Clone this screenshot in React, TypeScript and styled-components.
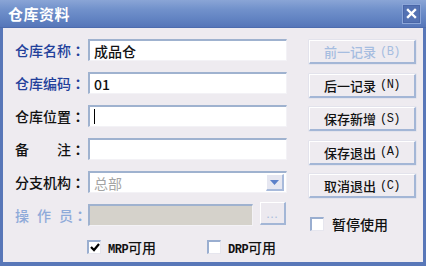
import styled, { createGlobalStyle } from "styled-components";

const GlobalStyle = createGlobalStyle`
	html, body {
		margin: 0;
		padding: 0;
		background: #ffffff;
	}
	* {
		box-sizing: border-box;
	}
`;

const CJK = `"Noto Sans CJK SC", "Noto Sans", sans-serif`;

const Window = styled.div`
	width: 426px;
	height: 266px;
	display: flex;
	flex-direction: column;
	background: #5877b8;
	padding: 0 3px 4px 3px;
	font-family: ${CJK};
`;

const TitleBar = styled.div`
	height: 28px;
	display: flex;
	align-items: center;
	justify-content: space-between;
	margin: 0 -3px;
	padding-left: 8px;
	padding-right: 5px;
	background: linear-gradient(180deg, #8aa5d6 0%, #7191cb 35%, #6283c2 70%, #5676b9 100%);
	border-bottom: 1px solid #4d6cae;
`;

const Title = styled.span`
	color: #ffffff;
	font-size: 15px;
	font-weight: 700;
	letter-spacing: 0.5px;
`;

const CloseButton = styled.div`
	width: 19px;
	height: 20px;
	display: flex;
	align-items: center;
	justify-content: center;
	background: #5472b3;
	border: 1px solid #8ba5d8;
	box-shadow: inset 0 0 0 1px #4a67a8;
`;

const Body = styled.div`
	flex: 1;
	display: flex;
	background: #eeebf0;
	padding: 11px 0 0 12px;
`;

const Form = styled.div`
	display: flex;
	flex-direction: column;
`;

const Grid = styled.div`
	display: grid;
	grid-template-columns: 70px 199px;
	column-gap: 3px;
	row-gap: 11px;
	align-items: center;
`;

const Label = styled.div<{ $tone?: "blue" | "dim" }>`
	font-size: 14px;
	font-weight: 500;
	line-height: 22px;
	white-space: nowrap;
	color: ${(p) => (p.$tone === "blue" ? "#22409b" : p.$tone === "dim" ? "#8eaad9" : "#111111")};
`;

const Colon = styled.span`
	font-family: "Noto Sans CJK JP", "Noto Sans CJK SC", sans-serif;
	font-weight: 700;
`;

const Spaced = styled.span<{ $gap: number }>`
	letter-spacing: ${(p) => p.$gap}px;
`;

const Field = styled.div<{ $disabled?: boolean }>`
	height: 22px;
	display: flex;
	align-items: center;
	padding-left: 4px;
	font-size: 14px;
	font-weight: 500;
	color: #111111;
	background: ${(p) => (p.$disabled ? "#d5d2cb" : "#ffffff")};
	border-style: solid;
	border-width: 2px 1px 1px 2px;
	border-color: #9fb2cf #f3f2f6 #f3f2f6 #9fb2cf;
	position: relative;
`;

const Caret = styled.span`
	display: inline-block;
	width: 1px;
	height: 15px;
	background: #000000;
`;

const GreyText = styled.span`
	color: #a4a4a4;
	font-weight: 400;
`;

const ArrowButton = styled.div`
	position: absolute;
	right: 2px;
	top: 1px;
	width: 18px;
	height: 17px;
	display: flex;
	align-items: center;
	justify-content: center;
	background: #e6e7f1;
	border-style: solid;
	border-width: 1px 2px 2px 1px;
	border-color: #ffffff #a8badb #a8badb #ffffff;
`;

const OperatorRow = styled.div`
	display: flex;
	align-items: center;
	gap: 7px;
`;

const DotsButton = styled.div`
	width: 26px;
	height: 23px;
	display: flex;
	align-items: center;
	justify-content: center;
	color: #a9bcdc;
	font-size: 11px;
	letter-spacing: 1px;
	background: #ece9ef;
	border-style: solid;
	border-width: 1px 2px 2px 1px;
	border-color: #ffffff #a3b6d6 #a3b6d6 #ffffff;
	margin-top: -3px;
`;

const CheckRow = styled.div`
	display: flex;
	align-items: center;
	margin-top: 13px;
	padding-left: 72px;
	height: 15px;
`;

const CheckItem = styled.div<{ $width?: number }>`
	display: flex;
	align-items: center;
	gap: 7px;
	width: ${(p) => (p.$width ? `${p.$width}px` : "auto")};
	font-size: 14px;
	font-weight: 500;
	color: #111111;
`;

const Latin = styled.span`
	font-family: "Liberation Mono", monospace;
	font-size: 12px;
	font-weight: 700;
	letter-spacing: -0.5px;
`;

const Box = styled.div`
	width: 14px;
	height: 14px;
	display: flex;
	align-items: center;
	justify-content: center;
	background: #ffffff;
	border-style: solid;
	border-width: 2px 1px 1px 2px;
	border-color: #9aaed0 #e6e6ee #e6e6ee #9aaed0;
`;

const ButtonColumn = styled.div`
	display: flex;
	flex-direction: column;
	gap: 9.5px;
	margin-left: 22px;
	margin-top: 1px;
	width: 107px;
`;

const Button = styled.div<{ $disabled?: boolean }>`
	height: 24px;
	display: flex;
	align-items: center;
	justify-content: center;
	font-size: 13px;
	font-weight: 500;
	color: ${(p) => (p.$disabled ? "#a6bde0" : "#111111")};
	background: #eeebf0;
	border-style: solid;
	border-width: 1px 2px 2px 1px;
	border-color: #ffffff #a3b6d6 #a3b6d6 #ffffff;
	box-shadow: 0 0 0 0.5px #d8dce8;
`;

const Key = styled.span`
	margin-left: 4px;
	font-family: "Liberation Mono", monospace;
	font-size: 12px;
	letter-spacing: -0.5px;
`;

const PauseItem = styled(CheckItem)`
	margin-top: 6.5px;
	padding-left: 1px;
	gap: 8px;
`;

const Check = () => (
	<svg width="10" height="9" viewBox="0 0 10 9">
		<polyline points="1,4 4,7 9,1" fill="none" stroke="#000" strokeWidth="2.2" />
	</svg>
);

const buttons = [
	{ text: "前一记录", key: "(B)", disabled: true },
	{ text: "后一记录", key: "(N)" },
	{ text: "保存新增", key: "(S)" },
	{ text: "保存退出", key: "(A)" },
	{ text: "取消退出", key: "(C)" },
];

export default function App() {
	return (
		<>
			<GlobalStyle />
			<Window>
				<TitleBar>
					<Title>仓库资料</Title>
					<CloseButton>
						<svg width="11" height="11" viewBox="0 0 11 11">
							<path d="M2 2 L9 9 M9 2 L2 9" stroke="#ffffff" strokeWidth="2.4" strokeLinecap="square" />
						</svg>
					</CloseButton>
				</TitleBar>
				<Body>
					<Form>
						<Grid>
							<Label $tone="blue">
								仓库名称<Colon>：</Colon>
							</Label>
							<Field>成品仓</Field>
							<Label $tone="blue">
								仓库编码<Colon>：</Colon>
							</Label>
							<Field>01</Field>
							<Label>
								仓库位置<Colon>：</Colon>
							</Label>
							<Field>
								<Caret />
							</Field>
							<Label>
								<Spaced $gap={28}>备</Spaced>注<Colon>：</Colon>
							</Label>
							<Field />
							<Label>
								分支机构<Colon>：</Colon>
							</Label>
							<Field>
								<GreyText>总部</GreyText>
								<ArrowButton>
									<svg width="9" height="5" viewBox="0 0 9 5">
										<path d="M0 0 L9 0 L4.5 5 Z" fill="#5b80c9" />
									</svg>
								</ArrowButton>
							</Field>
							<Label $tone="dim">
								<Spaced $gap={8}>操作</Spaced>员<Colon>：</Colon>
							</Label>
							<OperatorRow>
								<Field $disabled style={{ width: 165 }} />
								<DotsButton>...</DotsButton>
							</OperatorRow>
						</Grid>
						<CheckRow>
							<CheckItem $width={120}>
								<Box>
									<Check />
								</Box>
								<span>
									<Latin>MRP</Latin>可用
								</span>
							</CheckItem>
							<CheckItem>
								<Box />
								<span>
									<Latin>DRP</Latin>可用
								</span>
							</CheckItem>
						</CheckRow>
					</Form>
					<ButtonColumn>
						{buttons.map((b) => (
							<Button key={b.text} $disabled={b.disabled}>
								{b.text}
								<Key>{b.key}</Key>
							</Button>
						))}
						<PauseItem>
							<Box />
							<span>暂停使用</span>
						</PauseItem>
					</ButtonColumn>
				</Body>
			</Window>
		</>
	);
}
